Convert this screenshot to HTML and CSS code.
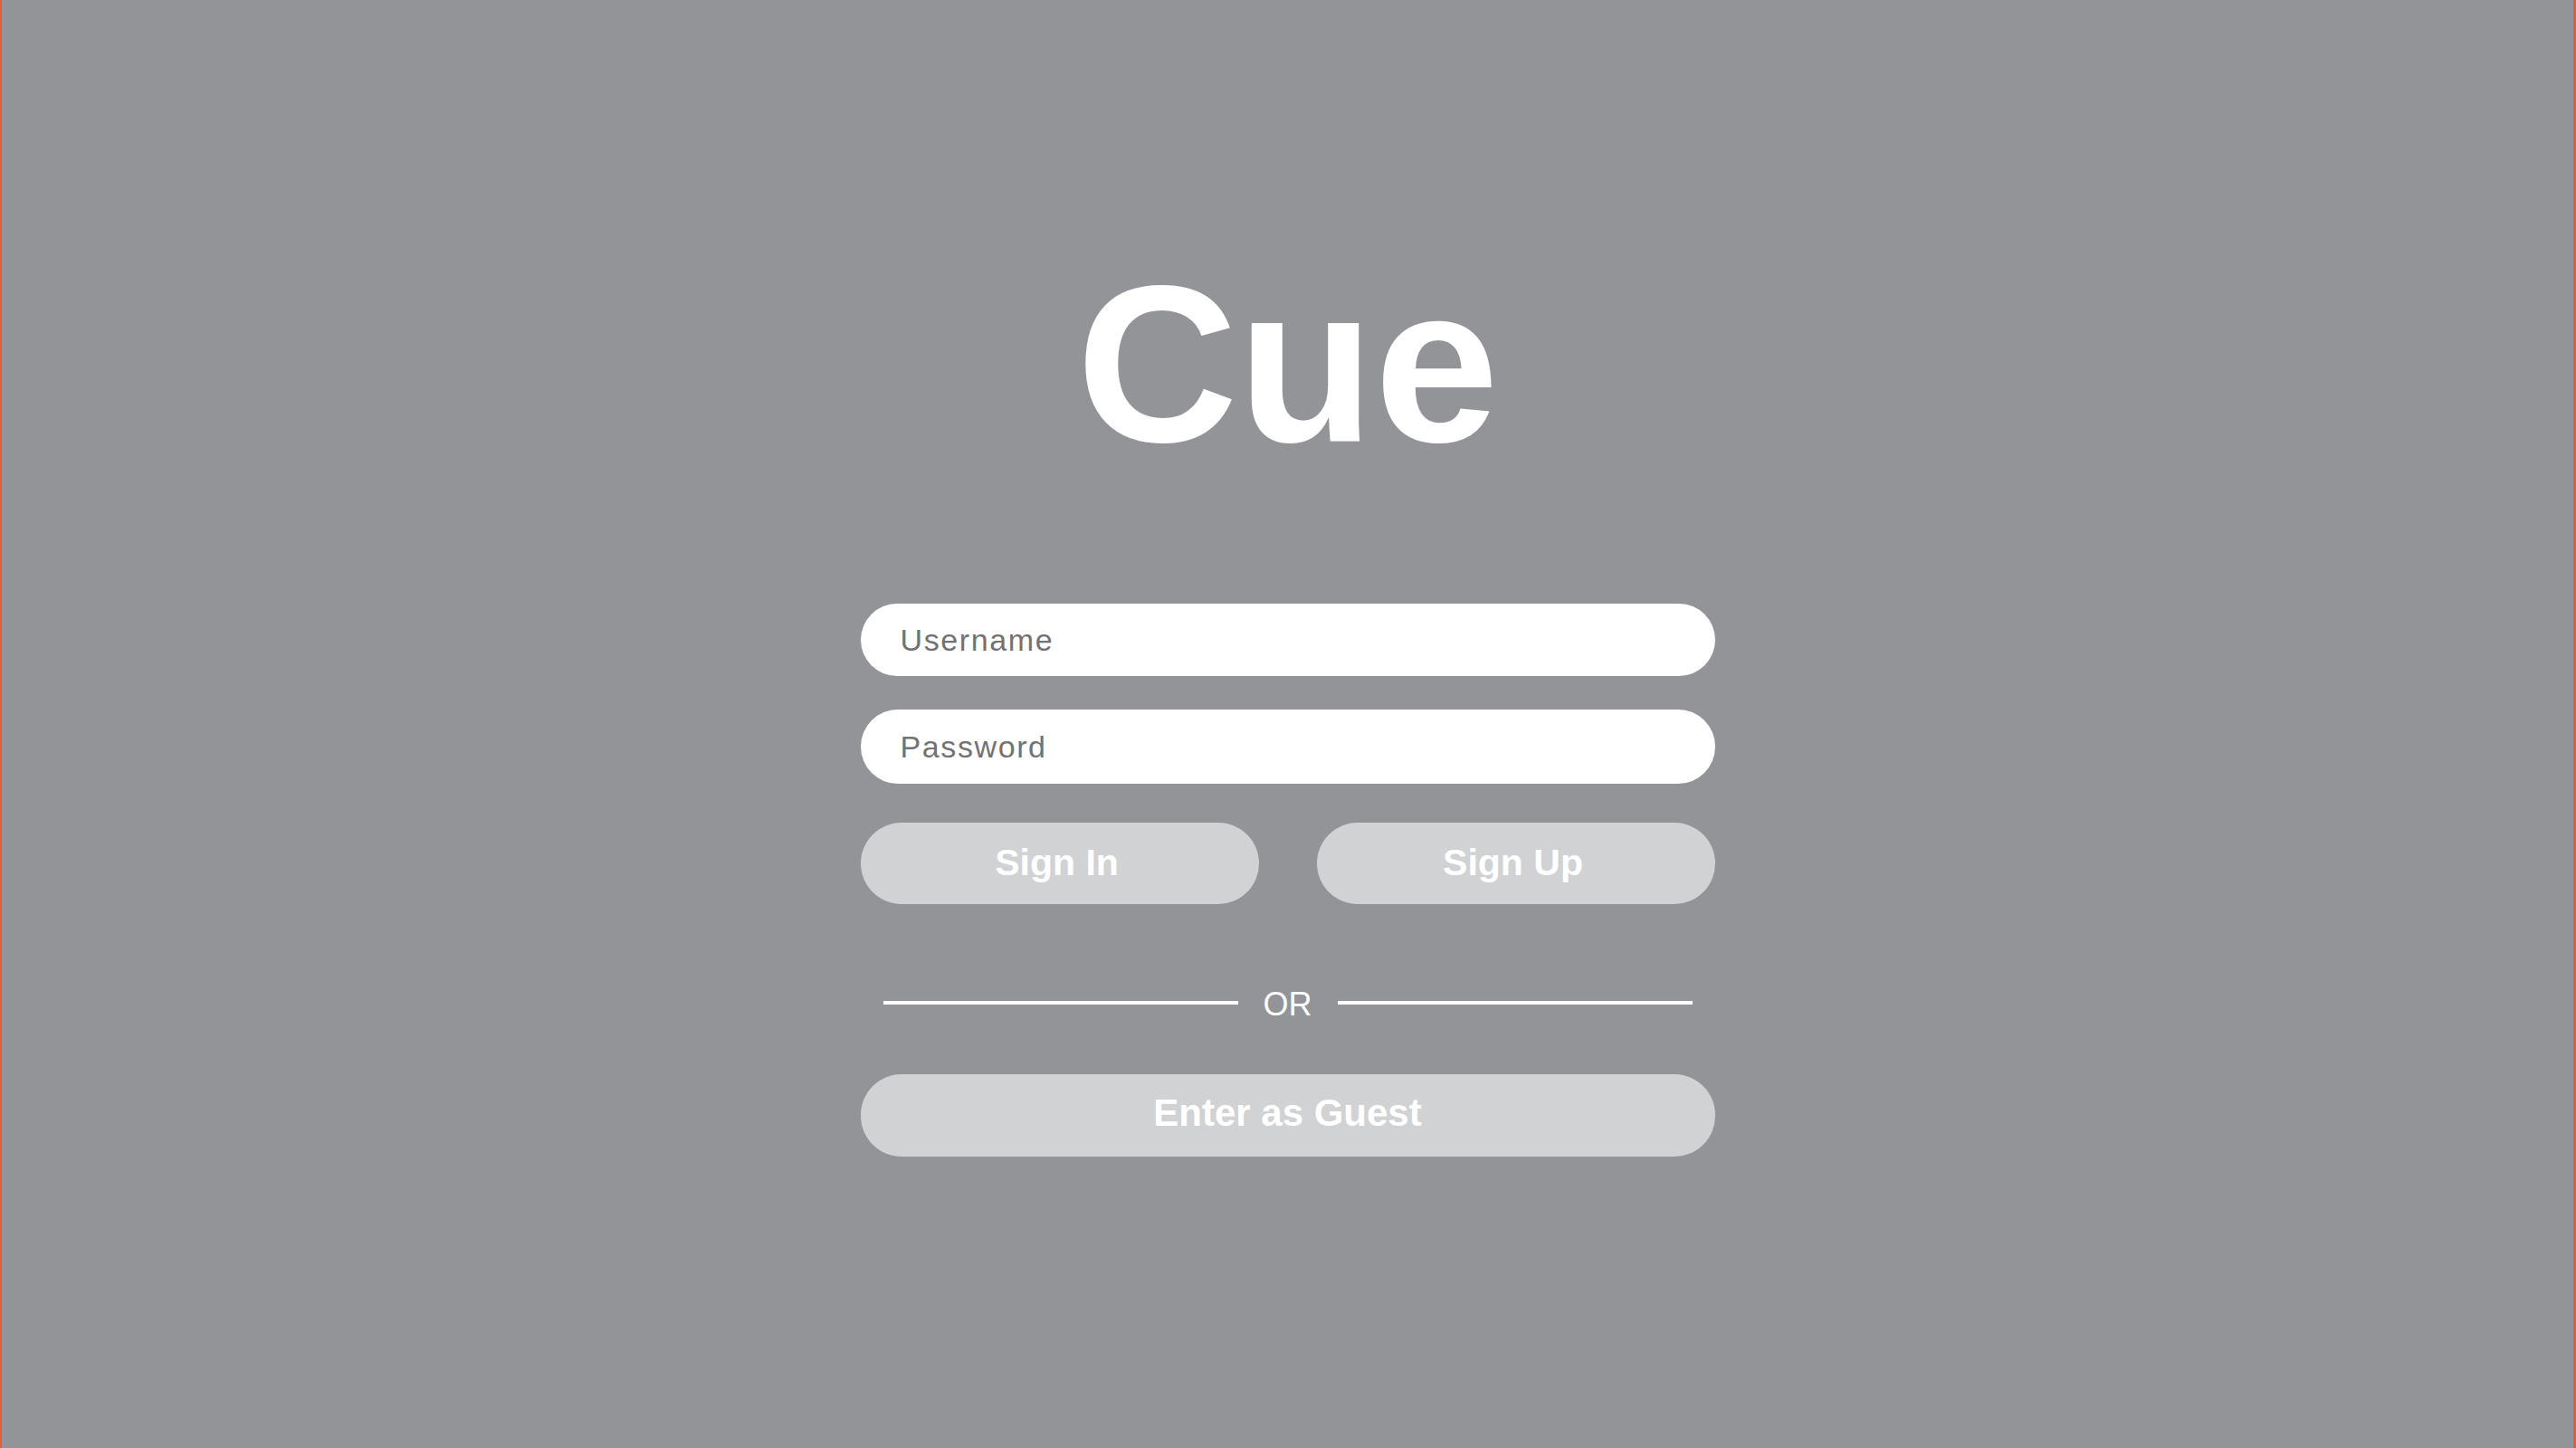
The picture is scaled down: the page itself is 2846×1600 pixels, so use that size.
FILE: index.html
```html
<!DOCTYPE html>
<html lang="en">
<head>
<meta charset="utf-8">
<title>Cue</title>
<link rel="stylesheet" href="styles.css">
</head>
<body>
<div class="page">
  <main class="login">
    <h1 class="title">Cue</h1>
    <form class="form">
      <input class="field field-user" type="text" placeholder="Username">
      <input class="field field-pass" type="password" placeholder="Password">
      <div class="actions">
        <button class="btn" type="button">Sign In</button>
        <button class="btn" type="button">Sign Up</button>
      </div>
      <div class="divider">
        <span class="rule"></span>
        <span class="or">OR</span>
        <span class="rule"></span>
      </div>
      <button class="btn btn-guest" type="button">Enter as Guest</button>
    </form>
  </main>
</div>
</body>
</html>
```

FILE: styles.css
```css
html, body {
  margin: 0;
  padding: 0;
}

body {
  font-family: "Liberation Sans", Arial, sans-serif;
  background: #939498;
}

.page {
  box-sizing: border-box;
  height: 1600px;
  background: #939498;
  border-left: 2px solid #e4612d;
  border-right: 3px solid #e4612d;
  display: flex;
  justify-content: center;
}

.login {
  width: 944px;
  padding-top: 279px;
  display: flex;
  flex-direction: column;
  align-items: stretch;
}

.title {
  margin: 0;
  font-family: "Liberation Sans", Arial, sans-serif;
  font-weight: 700;
  font-size: 247px;
  line-height: 247px;
  color: #ffffff;
  text-align: center;
}

.form {
  margin: 141px 0 0;
  display: flex;
  flex-direction: column;
}

.field {
  box-sizing: border-box;
  width: 100%;
  height: 80px;
  border: none;
  outline: none;
  border-radius: 40px;
  background: #ffffff;
  padding: 0 0 0 44px;
  margin: 0;
  font-family: "Liberation Sans", Arial, sans-serif;
  font-size: 34px;
  letter-spacing: 1.6px;
  color: #444;
}

.field::placeholder {
  color: #727274;
  opacity: 1;
}

.field-pass {
  margin-top: 37px;
  height: 82px;
  border-radius: 41px;
}

.actions {
  margin-top: 43px;
  display: grid;
  grid-template-columns: 1fr 1fr;
  column-gap: 64px;
}

.btn {
  box-sizing: border-box;
  height: 90px;
  border: none;
  border-radius: 45px;
  background: #d1d2d4;
  color: #ffffff;
  font-family: "Liberation Sans", Arial, sans-serif;
  font-weight: 700;
  font-size: 41px;
  padding: 0 6px 2px 0;
  margin: 0;
  display: flex;
  align-items: center;
  justify-content: center;
}

.divider {
  margin-top: 89px;
  height: 40px;
  padding: 0 25px;
  display: flex;
  align-items: center;
}

.rule {
  flex: 1;
  height: 4px;
  background: #ffffff;
}

.or {
  margin: 4px 28px 0;
  font-size: 36px;
  line-height: 36px;
  color: #ffffff;
}

.btn-guest {
  margin-top: 59px;
  height: 91px;
  font-size: 42px;
  padding: 0 0 6px;
}
```
